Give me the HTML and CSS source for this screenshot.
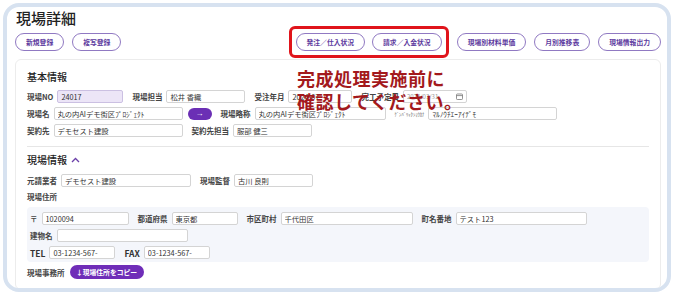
FILE: index.html
```html
<!DOCTYPE html>
<html lang="ja">
<head>
    <meta charset="UTF-8">
    <meta name="viewport" content="width=device-width, initial-scale=1.0">
    <title>現場詳細</title>
    <link rel="stylesheet" href="styles.css">
</head>
<body>
    <div class="frame">
        <h1 class="page-title">現場詳細</h1>

        <div class="toolbar">
            <button class="btn">新規登録</button>
            <button class="btn">複写登録</button>
            <div class="toolbar-right">
                <div class="alert-box">
                    <button class="btn">発注／仕入状況</button>
                    <button class="btn">請求／入金状況</button>
                </div>
                <button class="btn">現場別材料単価</button>
                <button class="btn">月別推移表</button>
                <button class="btn">現場情報出力</button>
            </div>
        </div>

        <div class="card">
            <h2 class="section-title">基本情報</h2>

            <div class="form-row first">
                <div class="field">
                    <label>現場NO</label>
                    <input type="text" class="w66 locked" value="24017">
                </div>
                <div class="field">
                    <label>現場担当</label>
                    <input type="text" class="w79" value="松井 香織">
                </div>
                <div class="field">
                    <label>受注年月</label>
                    <input type="text" class="w64" value="2024-07">
                </div>
                <div class="field">
                    <label>完工予定日</label>
                    <div class="date-input w64">
                        <span>2025/03/31</span>
                        <svg width="7" height="7" viewBox="0 0 7 7"><rect x="0.5" y="1" width="6" height="5.5" rx="0.8" fill="none" stroke="#777" stroke-width="0.8"/><line x1="0.5" y1="2.6" x2="6.5" y2="2.6" stroke="#777" stroke-width="0.8"/></svg>
                    </div>
                </div>
            </div>

            <div class="form-row">
                <div class="field">
                    <label>現場名</label>
                    <input type="text" class="w129" value="丸の内AIデモ街区ﾌﾟﾛｼﾞｪｸﾄ">
                </div>
                <button class="arrow-btn">→</button>
                <div class="field">
                    <label>現場略称</label>
                    <input type="text" class="w131" value="丸の内AIデモ街区ﾌﾟﾛｼﾞｪｸﾄ">
                </div>
                <div class="field">
                    <label class="tiny">ｹﾞﾝﾊﾞﾘｬｸｼｮｳｶﾅ</label>
                    <input type="text" class="w129" value="ﾏﾙﾉｳﾁｴｰｱｲﾃﾞﾓ">
                </div>
            </div>

            <div class="form-row">
                <div class="field">
                    <label>契約先</label>
                    <input type="text" class="w129" value="デモセスト建設">
                </div>
                <div class="field">
                    <label>契約先担当</label>
                    <input type="text" class="w79" value="服部 健三">
                </div>
            </div>

            <div class="divider"></div>

            <h2 class="section-title toggle">現場情報
                <svg width="9" height="6" viewBox="0 0 9 6"><polyline points="1,5 4.5,1.5 8,5" fill="none" stroke="#6a3fa8" stroke-width="1.3"/></svg>
            </h2>

            <div class="form-row spaced">
                <div class="field">
                    <label>元請業者</label>
                    <input type="text" class="w130" value="デモセスト建設">
                </div>
                <div class="field">
                    <label>現場監督</label>
                    <input type="text" class="w79" value="古川 良則">
                </div>
            </div>

            <div class="group-label">現場住所</div>

            <div class="address-box">
                <div class="form-row">
                    <div class="field">
                        <label>〒</label>
                        <input type="text" class="w87" value="1020094">
                    </div>
                    <div class="field">
                        <label>都道府県</label>
                        <input type="text" class="w66" value="東京都">
                    </div>
                    <div class="field">
                        <label>市区町村</label>
                        <input type="text" class="w132" value="千代田区">
                    </div>
                    <div class="field">
                        <label>町名番地</label>
                        <input type="text" class="w131" value="テスト123">
                    </div>
                </div>
                <div class="form-row">
                    <div class="field">
                        <label>建物名</label>
                        <input type="text" class="w131" value="">
                    </div>
                </div>
                <div class="form-row">
                    <div class="field">
                        <label class="latin">TEL</label>
                        <input type="text" class="w66" value="03-1234-567-">
                    </div>
                    <div class="field">
                        <label class="latin">FAX</label>
                        <input type="text" class="w66" value="03-1234-567-">
                    </div>
                </div>
            </div>

            <div class="office-row">
                <label>現場事務所</label>
                <button class="copy-btn">↓現場住所をコピー</button>
            </div>
        </div>

        <div class="notice">完成処理実施前に<br>確認してください。</div>
    </div>
</body>
</html>
```

FILE: styles.css
```css
* {
    box-sizing: border-box;
}
body {
    margin: 0;
    background: #fff;
    font-family: "Noto Sans CJK JP", "Noto Sans", sans-serif;
    color: #333;
}
.frame {
    position: relative;
    margin: 3px;
    height: 289px;
    border: 4px solid #d7e2f0;
    border-radius: 16px;
    padding: 2px 6px 0 8px;
    overflow: hidden;
    display: flex;
    flex-direction: column;
}
.page-title {
    margin: 0 0 0 1px;
    font-size: 15px;
    line-height: 18px;
    font-weight: 500;
    color: #222;
}
.toolbar {
    display: flex;
    align-items: center;
    gap: 8px;
    height: 18px;
    margin-top: 6px;
}
.toolbar-right {
    margin-left: auto;
    display: flex;
    align-items: center;
    gap: 8px;
}
.alert-box {
    display: flex;
    gap: 7px;
    margin: -7px -4px -7px 0;
    padding: 4px;
    border: 3px solid #e0141b;
    border-radius: 6px;
}
.alert-box + .btn {
    margin-left: 4px;
}
.btn {
    height: 18px;
    padding: 0 10px;
    border: 1px solid #9079c2;
    border-radius: 9px;
    background: #fff;
    color: #5d3a9e;
    font-family: "Noto Sans CJK JP", sans-serif;
    font-size: 6.8px;
    font-weight: bold;
    line-height: 16px;
    white-space: nowrap;
}
.card {
    flex: 1;
    margin-top: 8px;
    padding: 10px 11px;
    border: 1px solid #ececec;
    border-radius: 6px;
}
.section-title {
    margin: 0;
    font-size: 10px;
    line-height: 14px;
    font-weight: 500;
    color: #222;
    display: flex;
    align-items: center;
    gap: 4px;
}
.form-row {
    display: flex;
    align-items: center;
    height: 13px;
    margin-top: 4px;
}
.form-row.first {
    margin-top: 6px;
}
.form-row.spaced {
    margin-top: 7px;
}
.field {
    display: flex;
    align-items: center;
    gap: 4px;
    margin-right: 9px;
}
label {
    font-size: 7.5px;
    font-weight: bold;
    color: #444;
    white-space: nowrap;
}
label.tiny {
    font-size: 4.6px;
    font-weight: normal;
    color: #555;
}
label.latin {
    font-size: 8.5px;
    color: #333;
}
input[type="text"], .date-input {
    height: 13px;
    padding: 0 3px;
    border: 1px solid #d4d4d4;
    border-radius: 2px;
    background: #fff;
    font-family: "Noto Sans CJK JP", sans-serif;
    font-size: 7.3px;
    color: #333;
    outline: none;
}
input.locked {
    background: #ece5f7;
    border-color: #cbc0e2;
}
.date-input {
    display: flex;
    align-items: center;
    justify-content: space-between;
    color: #999;
    font-size: 6px;
}
.w64 { width: 64px; }
.w66 { width: 66px; }
.w79 { width: 79px; }
.w87 { width: 87px; }
.w129 { width: 129px; }
.w130 { width: 130px; }
.w131 { width: 131px; }
.w132 { width: 132px; }
.arrow-btn {
    width: 24px;
    height: 12px;
    margin: 0 9px 0 -4px;
    padding: 0;
    border: none;
    border-radius: 6px;
    background: #6b2fb5;
    color: #fff;
    font-size: 8px;
    line-height: 12px;
}
.divider {
    margin: 9px 0 6px;
    border-top: 1px solid #e6e6e6;
}
.group-label {
    margin-top: 4px;
    font-size: 7.5px;
    line-height: 12px;
    font-weight: bold;
    color: #444;
}
.address-box {
    margin-top: 4px;
    padding: 1px 3px 3px;
    background: #f4f6fb;
    border-radius: 4px;
}
.office-row {
    display: flex;
    align-items: center;
    gap: 5px;
    margin-top: 3px;
}
.copy-btn {
    height: 14px;
    width: 74px;
    padding: 0;
    border: none;
    border-radius: 7px;
    background: #6f2db8;
    color: #fff;
    font-family: "Noto Sans CJK JP", sans-serif;
    font-size: 6.8px;
    font-weight: bold;
    line-height: 14px;
}
.notice {
    position: absolute;
    left: 290px;
    top: 60px;
    font-size: 18px;
    line-height: 23px;
    font-weight: bold;
    letter-spacing: 0.5px;
    color: #a3191c;
    white-space: nowrap;
}
```
